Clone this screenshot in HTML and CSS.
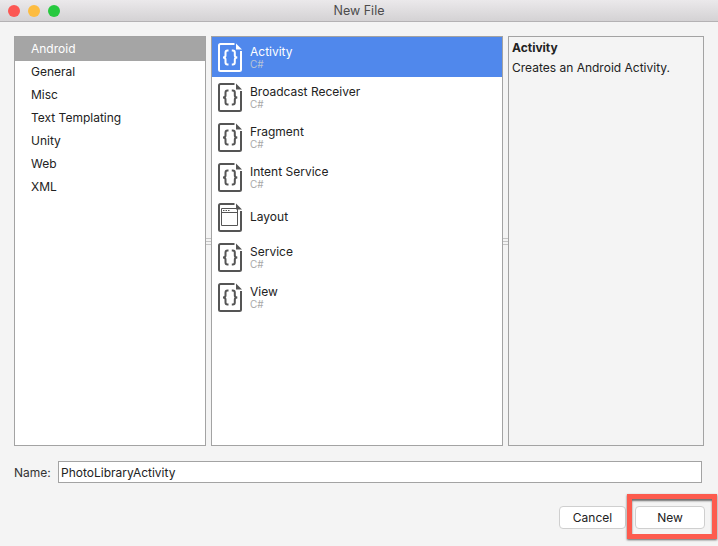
FILE: index.html
```html
<!DOCTYPE html>
<html lang="en">
<head>
<meta charset="utf-8">
<title>New File</title>
<link rel="stylesheet" href="styles.css">
</head>
<body>
<svg class="defs" width="0" height="0" aria-hidden="true">
  <symbol id="code" viewBox="0 0 25 29">
    <path d="M16.500 1H2.500Q1 1 1 2.500V26.500Q1 28 2.500 28H21.500Q23 28 23 26.500V8" fill="none" stroke="currentColor" stroke-width="2"/>
    <path d="M18 0.500L24 6.500H18Z" fill="currentColor"/>
    <path d="M10.500 7.500H9.500Q7.500 7.500 7.500 9.500V12.500Q7.500 14.500 5 14.500Q7.500 14.500 7.500 16.500V19.500Q7.500 21.500 9.500 21.500H10.500M13.800 7.500H14.800Q16.800 7.500 16.800 9.500V12.500Q16.800 14.500 19.300 14.500Q16.800 14.500 16.800 16.500V19.500Q16.800 21.500 14.800 21.500H13.800" fill="none" stroke="currentColor" stroke-width="2"/>
  </symbol>
  <symbol id="window" viewBox="0 0 25 29">
    <path d="M16.500 1H2.500Q1 1 1 2.500V26.500Q1 28 2.500 28H21.500Q23 28 23 26.500V8" fill="none" stroke="currentColor" stroke-width="2"/>
    <path d="M18 0.500L24 6.500H18Z" fill="currentColor"/>
    <path d="M3.500 5.500H19.500V22.500H3.500ZM3.500 9.500H19.500" fill="none" stroke="currentColor" stroke-width="1"/>
    <path d="M5 7.500H6.500M7.500 7.500H9M10 7.500H11.500" fill="none" stroke="currentColor" stroke-width="1"/>
  </symbol>
</svg>
<div class="window">
  <header class="titlebar">
    <div class="lights">
      <span class="light light-close"></span>
      <span class="light light-min"></span>
      <span class="light light-max"></span>
    </div>
    <div class="title">New File</div>
  </header>
  <main class="content">
    <div class="panes">
      <ul class="pane categories">
        <li class="category selected">Android</li>
        <li class="category">General</li>
        <li class="category">Misc</li>
        <li class="category">Text Templating</li>
        <li class="category">Unity</li>
        <li class="category">Web</li>
        <li class="category">XML</li>
      </ul>
      <div class="splitter"><span></span></div>
      <ul class="pane templates">
        <li class="template selected">
          <svg class="icon"><use href="#code"/></svg>
          <div class="meta"><div class="name">Activity</div><div class="lang">C#</div></div>
        </li>
        <li class="template">
          <svg class="icon"><use href="#code"/></svg>
          <div class="meta"><div class="name">Broadcast Receiver</div><div class="lang">C#</div></div>
        </li>
        <li class="template">
          <svg class="icon"><use href="#code"/></svg>
          <div class="meta"><div class="name">Fragment</div><div class="lang">C#</div></div>
        </li>
        <li class="template">
          <svg class="icon"><use href="#code"/></svg>
          <div class="meta"><div class="name">Intent Service</div><div class="lang">C#</div></div>
        </li>
        <li class="template">
          <svg class="icon"><use href="#window"/></svg>
          <div class="meta"><div class="name">Layout</div></div>
        </li>
        <li class="template">
          <svg class="icon"><use href="#code"/></svg>
          <div class="meta"><div class="name">Service</div><div class="lang">C#</div></div>
        </li>
        <li class="template">
          <svg class="icon"><use href="#code"/></svg>
          <div class="meta"><div class="name">View</div><div class="lang">C#</div></div>
        </li>
      </ul>
      <div class="splitter"><span></span></div>
      <aside class="pane details">
        <div class="details-title">Activity</div>
        <div class="details-text">Creates an Android Activity.</div>
      </aside>
    </div>
    <div class="name-row">
      <label class="name-label" for="file-name">Name:</label>
      <input class="name-input" id="file-name" type="text" value="PhotoLibraryActivity">
    </div>
    <div class="actions">
      <button class="btn btn-cancel" type="button">Cancel</button>
      <button class="btn btn-new" type="button">New</button>
    </div>
  </main>
  <div class="highlight"></div>
</div>
</body>
</html>
```
FILE: styles.css
```css
* { box-sizing: border-box; }
html, body { margin: 0; padding: 0; }
body {
  width: 718px;
  height: 546px;
  overflow: hidden;
  background: #f4f4f4;
  color: #222;
  font-family: Inter, "Liberation Sans", sans-serif;
  font-size: 12px;
}
.defs { position: absolute; }
ul { list-style: none; margin: 0; padding: 0; }

.window { position: relative; width: 718px; height: 546px; display: flex; flex-direction: column; }

.titlebar {
  position: relative;
  height: 22px;
  flex: none;
  background: linear-gradient(#ebe9eb, #d4d2d4);
  border-bottom: 1px solid #b4b2b4;
  display: flex;
  align-items: center;
  justify-content: center;
}
.lights { position: absolute; left: 8px; top: 5px; display: flex; gap: 8px; }
.light { width: 12px; height: 12px; border-radius: 50%; }
.light-close { background: #fc5753; }
.light-min { background: #fdbc40; }
.light-max { background: #27c93f; }
.title { color: #4c4c4c; font-size: 12.5px; }

.content { flex: 1; padding: 14px 14px 0; display: flex; flex-direction: column; }

.panes { display: flex; height: 410px; }
.pane { border: 1px solid #a3a3a3; background: #fff; overflow: hidden; }
.categories { width: 192px; }
.category { height: 23px; line-height: 22px; padding-left: 16px; }
.category.selected { height: 24px; line-height: 23px; background: #a5a5a5; color: #fff; }

.splitter { width: 5px; display: flex; align-items: center; justify-content: center; }
.splitter span {
  width: 5px;
  height: 7px;
  border-top: 1px solid #c4c4c4;
  border-bottom: 1px solid #c4c4c4;
  background: linear-gradient(transparent 2px, #c4c4c4 2px, #c4c4c4 3px, transparent 3px);
}

.templates { width: 292px; }
.template { height: 40px; display: flex; align-items: center; padding-left: 6px; gap: 7px; color: #222; }
.template .icon { width: 25px; height: 29px; flex: none; color: #555; }
.template.selected { background: #5088ec; color: #fff; }
.template.selected .icon { color: #fff; }
.template.selected .lang { color: #b9c4d6; }
.meta { margin-top: -1px; }
.name { line-height: 13px; }
.lang { font-size: 10px; line-height: 13px; margin-bottom: -2px; color: #a8a8a8; }

.details { width: 196px; background: #f4f4f4; padding: 3px 3px; }
.details-title { font-weight: 700; line-height: 15px; }
.details-text { line-height: 15px; margin-top: 5px; }

.name-row { display: flex; align-items: center; gap: 8px; margin-top: 15px; height: 22px; width: 688px; }
.name-label { color: #333; width: 36px; flex: none; }
.name-input {
  width: 644px;
  height: 22px;
  border: 1px solid #a3a3a3;
  background: #fff;
  padding: 0 2px;
  font: inherit;
  color: #222;
  outline: none;
}

.actions { display: flex; justify-content: flex-end; gap: 9px; margin-top: 23px; width: 691px; }
.btn {
  height: 23px;
  border: 1px solid #cfcfcf;
  border-radius: 4px;
  background: #fff;
  font: inherit;
  color: #222;
  padding: 0;
}
.btn-cancel { width: 67px; }
.btn-new { width: 70px; }

.highlight {
  position: absolute;
  left: 627px;
  top: 494px;
  width: 90px;
  height: 45px;
  border: 5px solid #fd5b4e;
  box-shadow: 0 1px 2px rgba(0,0,0,.6), inset 0 2px 2px rgba(0,0,0,.55);
}
```
